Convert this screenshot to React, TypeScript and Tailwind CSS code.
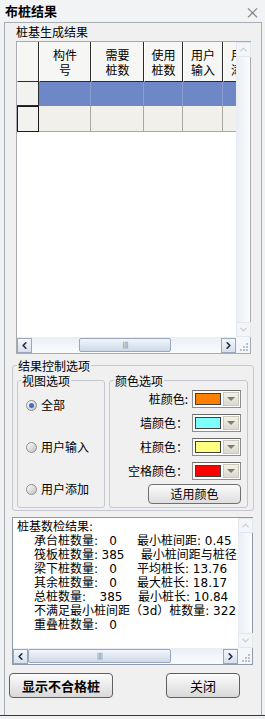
import React from 'react';
import { ChevronLeft, ChevronRight, ChevronUp, ChevronDown } from 'lucide-react';

const COLUMNS = [
  { w: 'w-[22px]', title: '' },
  { w: 'w-[52px]', title: '构件\n号' },
  { w: 'w-[53px]', title: '需要\n桩数' },
  { w: 'w-[39px]', title: '使用\n桩数' },
  { w: 'w-[40px]', title: '用户\n输入' },
  { w: 'w-[40px]', title: '用户\n添加' },
];

const COLORS = [
  { label: '桩颜色:', color: 'bg-[#ff8000]' },
  { label: '墙颜色：', color: 'bg-[#80ffff]' },
  { label: '柱颜色：', color: 'bg-[#ffff80]' },
  { label: '空格颜色：', color: 'bg-[#ff0000]' },
];

// label, value, second column, short label?
const STATS: [string, string, string, boolean][] = [
  ['承台桩数量:', '0', '最小桩间距: 0.45', false],
  ['筏板桩数量:', '385', ' 最小桩间距与桩径比: 1.5', false],
  ['梁下桩数量:', '0', '平均桩长: 13.76', false],
  ['其余桩数量:', '0', '最大桩长: 18.17', false],
  ['总桩数量:', '385', '最小桩长: 10.84', true],
];

const ArrowBox = ({ dir, active }: { dir: 'up' | 'down' | 'left' | 'right'; active?: boolean }) => {
  const cls = active ? 'text-[#1d2b44]' : 'text-[#c4cad4]';
  const Icon = dir === 'up' ? ChevronUp : dir === 'down' ? ChevronDown : dir === 'left' ? ChevronLeft : ChevronRight;
  return (
    <div
      className={`w-[15px] h-[15px] shrink-0 flex items-center justify-center ${
        active
          ? 'border border-[#9aa6ba] bg-gradient-to-b from-[#f4f7fb] to-[#d8e0ec]'
          : 'border border-[#e3e7ee] bg-[#f3f5f9]'
      }`}
    >
      <Icon size={11} strokeWidth={active ? 3.5 : 2.5} className={cls} />
    </div>
  );
};

const HScroll = ({ thumbW, thumbL }: { thumbW: string; thumbL: string }) => (
  <div className="flex h-[16px] items-center bg-gradient-to-b from-[#e9eef6] to-[#fbfcfe]">
    <ArrowBox dir="left" active />
    <div className="flex-1 h-full flex items-center">
      <div className={thumbL} />
      <div
        className={`${thumbW} h-[14px] rounded-[2px] border border-[#97a5bd] bg-gradient-to-b from-[#f3f6fb] to-[#cfd9e8] flex items-center justify-center`}
      >
        <span className="text-[7px] leading-none tracking-[-1px] text-[#7d8aa3] font-['DejaVu_Sans',sans-serif]">||||</span>
      </div>
    </div>
    <ArrowBox dir="right" active />
  </div>
);

const Grip = () => (
  <div className="w-[14px] h-[16px] shrink-0 bg-[#f4f6fa] flex items-end justify-end p-[2px]">
    <div className="grid grid-cols-3 gap-[1px]">
      {[0, 1, 2, 3, 4, 5, 6, 7, 8].map(i => (
        <div key={i} className={`w-[2px] h-[2px] ${i === 0 || i === 1 || i === 3 ? 'bg-transparent' : 'bg-[#b7c0cf]'}`} />
      ))}
    </div>
  </div>
);

const Radio = ({ checked, label }: { checked?: boolean; label: string }) => (
  <div className="flex items-center gap-[4px] h-[14px]">
    <div className="w-[11px] h-[11px] rounded-full border border-[#8d8d8d] bg-gradient-to-br from-[#ffffff] to-[#c0c0c0] flex items-center justify-center">
      {checked && <div className="w-[5px] h-[5px] rounded-full bg-[#3d6fc6]" />}
    </div>
    <span>{label}</span>
  </div>
);

const App: React.FC = () => {
  return (
    <div className="w-[265px] h-[719px] bg-[#f0f1f3] text-[12px] leading-[14px] text-black font-['Noto_Sans_CJK_SC',sans-serif] overflow-hidden">
      {/* Title bar */}
      <div className="h-[22px] flex items-center justify-between pl-[5px] pr-[5px] bg-[#f2f3f5]">
        <span className="text-[13px] font-bold">布桩结果</span>
        <span className="text-[15px] text-[#7a7a7a] leading-none">×</span>
      </div>

      {/* Panel */}
      <div className="ml-[4px] w-[258px] h-[693px] border-x border-t border-[#a8acb3] bg-[#f0f0f0] flex flex-col">
        <div className="h-[18px] pl-[11px] leading-[18px]">桩基生成结果</div>

        {/* Grid */}
        <div className="ml-[11px] w-[235px] h-[313px] border border-[#a7abb0] bg-white flex flex-col">
          <div className="flex flex-1 min-h-0">
            <div className="w-[219px] shrink-0 overflow-hidden">
              <div className="w-[246px]">
                <div className="flex h-[40px] bg-[#f6f6f4]">
                  {COLUMNS.map((c, i) => (
                    <div
                      key={i}
                      className={`${c.w} shrink-0 border-r border-b border-[#2b2b2b] border-l border-l-white flex items-center justify-center text-center whitespace-pre leading-[15px]`}
                    >
                      {c.title}
                    </div>
                  ))}
                </div>
                <div className="flex h-[24px]">
                  {COLUMNS.map((c, i) => (
                    <div
                      key={i}
                      className={`${c.w} shrink-0 ${
                        i === 0 ? 'bg-[#f2f2f0] border-r border-b border-[#2b2b2b]' : 'bg-[#6e87c7] border-r border-[#8a9ccc]'
                      }`}
                    />
                  ))}
                </div>
                <div className="flex h-[26px]">
                  {COLUMNS.map((c, i) => (
                    <div
                      key={i}
                      className={`${c.w} shrink-0 ${
                        i === 0
                          ? 'bg-[#f2f2f0] border-[1.5px] border-[#1a1a1a]'
                          : 'bg-[#f1f0eb] border-r border-b border-[#aaa99f]'
                      }`}
                    />
                  ))}
                </div>
              </div>
            </div>
            <div className="w-[14px] flex flex-col justify-between bg-gradient-to-r from-[#e9edf4] to-[#fbfcfe]">
              <ArrowBox dir="up" />
              <ArrowBox dir="down" />
            </div>
          </div>
          <div className="flex">
            <div className="flex-1">
              <HScroll thumbL="w-[47px]" thumbW="w-[92px]" />
            </div>
            <Grip />
          </div>
        </div>

        {/* Result control options */}
        <fieldset className="mt-[5px] ml-[7px] w-[242px] h-[152px] border border-[#c5c9cf] rounded-[3px] px-[4px] pb-[3px]">
          <legend className="px-[1px] leading-[13px]">结果控制选项</legend>
          <div className="flex gap-[4px] w-full">
            <fieldset className="mt-[2px] w-[88px] h-[134px] border border-[#c5c9cf] rounded-[3px]">
              <legend className="ml-[3px] px-[1px] leading-[13px]">视图选项</legend>
              <div className="flex flex-col gap-[28px] pt-[11px] pl-[8px]">
                <Radio checked label="全部" />
                <Radio label="用户输入" />
                <Radio label="用户添加" />
              </div>
            </fieldset>
            <fieldset className="mt-[2px] w-[139px] h-[134px] border border-[#c5c9cf] rounded-[3px]">
              <legend className="ml-[4px] px-[1px] leading-[13px]">颜色选项</legend>
              <div className="flex flex-col items-end pr-[6px] pt-[3px] gap-[6px]">
                {COLORS.map(c => (
                  <div key={c.label} className="flex items-center gap-[4px] h-[18px]">
                    <span>{c.label}</span>
                    <div className="w-[49px] h-[18px] border border-[#8e8e8e] border-t-[#6d6d6d] bg-white flex items-center">
                      <div className={`ml-[2px] w-[26px] h-[12px] border border-[#404040] ${c.color}`} />
                      <div className="ml-auto mr-[1px] w-[16px] h-[14px] bg-gradient-to-b from-[#f3f1ea] to-[#dcd9cf] border border-[#c9c6bb] flex items-center justify-center">
                        <div className="w-0 h-0 border-l-[4px] border-r-[4px] border-t-[4px] border-l-transparent border-r-transparent border-t-[#7a7a7a]" />
                      </div>
                    </div>
                  </div>
                ))}
                <button className="mt-[-2px] w-[93px] h-[20px] rounded-[4px] border border-[#707070] bg-gradient-to-b from-[#fbfbfb] to-[#dedede] leading-[18px]">
                  适用颜色
                </button>
              </div>
            </fieldset>
          </div>
        </fieldset>

        {/* Stats text box */}
        <div className="mt-[6px] ml-[7px] w-[241px] h-[148px] border border-[#8e99ab] bg-white flex flex-col">
          <div className="flex flex-1 min-h-0">
            <div className="w-[225px] shrink-0 overflow-hidden pt-[2px] pl-[4px] font-['DejaVu_Sans','Noto_Sans_CJK_SC',sans-serif] text-[12px] leading-[14px] whitespace-nowrap">
              <div>桩基数检结果:</div>
              <div className="pl-[17px]">
                {STATS.map(([a, b, c, short]) => (
                  <div key={a} className="flex">
                    <span className={`shrink-0 ${short ? 'w-[60px]' : 'w-[66px]'}`}>{a}</span>
                    <span className={`shrink-0 text-center ${short ? 'w-[34px]' : 'w-[26px]'}`}>{b}</span>
                    <span className={`shrink-0 whitespace-pre ${short ? 'pl-[10px]' : 'pl-[11px]'}`}>{c}</span>
                  </div>
                ))}
                <div>不满足最小桩间距（3d）桩数量: 322</div>
                <div className="flex">
                  <span className="shrink-0 w-[66px]">重叠桩数量:</span>
                  <span className="shrink-0 w-[26px] text-center">0</span>
                </div>
              </div>
            </div>
            <div className="w-[14px] ml-auto flex flex-col justify-between bg-gradient-to-r from-[#e9edf4] to-[#fbfcfe]">
              <ArrowBox dir="up" />
              <ArrowBox dir="down" />
            </div>
          </div>
          <div className="flex">
            <div className="flex-1">
              <HScroll thumbL="w-0" thumbW="w-[143px]" />
            </div>
            <Grip />
          </div>
        </div>

        {/* Buttons */}
        <div className="mt-[8px] flex pl-[4px] gap-[53px]">
          <button className="w-[104px] h-[25px] rounded-[4px] border border-[#5f5f5f] bg-gradient-to-b from-[#fcfcfc] to-[#d9d9d9] text-[13px] font-bold">
            显示不合格桩
          </button>
          <button className="w-[74px] h-[25px] rounded-[4px] border border-[#5f5f5f] bg-gradient-to-b from-[#fcfcfc] to-[#d9d9d9] text-[13px]">
            关闭
          </button>
        </div>
      </div>
      <div className="h-[1px] bg-[#3a3a3a]" />
    </div>
  );
};

export default App;
